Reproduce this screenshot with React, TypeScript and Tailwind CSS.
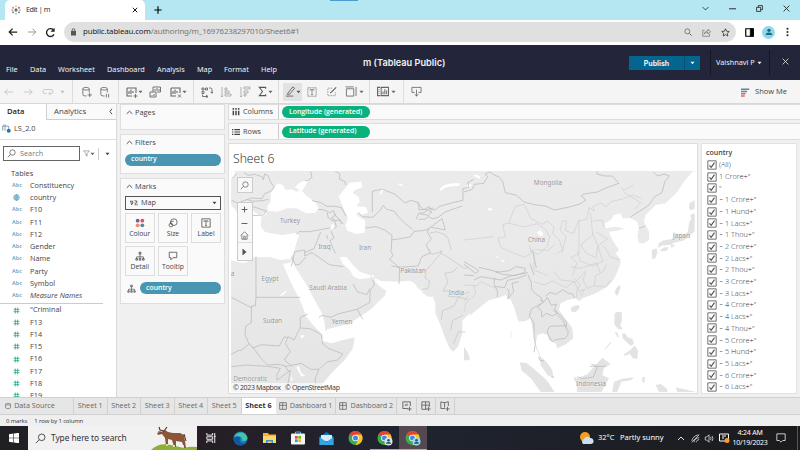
import React from 'react';

type IconProps = { w?: number; h?: number; vb?: string; children: React.ReactNode; className?: string };
const Ico = ({ w = 12, h = 12, vb = '0 0 12 12', children, className = '' }: IconProps) => (
  <svg width={w} height={h} viewBox={vb} fill="none" stroke="currentColor" strokeWidth="0.9" className={'shrink-0 ' + className}>
    {children}
  </svg>
);
const Caret = ({ className = '' }: { className?: string }) => (
  <Ico w={5} h={4} vb="0 0 5 4" className={className}><path d="M.5 .8h4L2.500 3.300z" fill="currentColor" stroke="none" /></Ico>
);
const Search = ({ size = 10, className = '' }: { size?: number; className?: string }) => (
  <Ico w={size} h={size} className={className}><circle cx="7.300" cy="4.700" r="3.600" /><path d="M4.700 7.300L1 11" /></Ico>
);
const Chevron = () => <Ico w={7} h={5} vb="0 0 7 5"><path d="M.7 3.800L3.500 1.200l2.800 2.600" /></Ico>;

function Browser() {
  return (
    <div className="font-['Noto_Sans',sans-serif] text-[#333]">
      <div className="flex h-5 bg-[#b5e7f2] pl-[5px]">
        <div className="flex w-[140px] items-center rounded-t-[5px] bg-white pl-[6px] pr-[7px]">
          <Ico w={10} h={10}>
            <g strokeWidth="1.300"><path stroke="#444" d="M6 4v4M4 6h4" /><path stroke="#d98f4a" d="M6 .5v2M2.500 2v2.400M1.300 3.200h2.400" /><path stroke="#c0606a" d="M9.500 2v2.400M8.300 3.200h2.400M.5 6h2" /><path stroke="#69939f" d="M2.500 7.600V10M1.300 8.800h2.400M9.500 7.600V10M8.300 8.800h2.400M6 9.500v2M9.500 6h2" /></g>
          </Ico>
          <span className="ml-[5px] text-[7.200px] leading-none tracking-[-.4px]">Edit | m</span>
          <Ico w={6} h={6} className="ml-auto text-black"><path d="M1.500 1.500l9 9M10.500 1.500l-9 9" strokeWidth="1.800" /></Ico>
        </div>
        <Ico w={8} h={8} className="ml-[9px] mt-[6px] text-black"><path d="M6 .5v11M.5 6h11" strokeWidth="1.700" /></Ico>
        <div className="ml-[168px] h-px w-7 bg-[#4a9fd0]" />
        <div className="ml-auto flex items-center gap-[20px] pb-[3px] pr-[10px] text-[#222]">
          <Ico w={7} h={7}><path d="M1 3.500l5 5 5-5" strokeWidth="1.400" /></Ico>
          <Ico w={7} h={7}><path d="M0 6.500h12" strokeWidth="1.600" /></Ico>
          <Ico w={7} h={7}><path d="M1 4h7v7H1zM4 4V1h7v7H8" strokeWidth="1.400" /></Ico>
          <Ico w={7} h={7}><path d="M1 1l10 10M11 1L1 11" strokeWidth="1.500" /></Ico>
        </div>
      </div>
      <div className="flex h-[25px] items-center bg-white pb-px pl-[8px]">
        <Ico w={10} h={10} className="text-[#222]"><path d="M11 6H1.500M5.500 2l-4 4 4 4" strokeWidth="1.500" /></Ico>
        <Ico w={10} h={10} className="ml-[9px] text-[#999]"><path d="M1 6h9.500M6.500 2l4 4-4 4" strokeWidth="1.200" /></Ico>
        <Ico w={11} h={11} className="ml-[8px] text-[#222]"><path d="M9.800 8A4.300 4.300 0 1 1 9 3" strokeWidth="1.500" /><path d="M10.500.8v4.400H6z" fill="currentColor" stroke="none" /></Ico>
        <div className="ml-[8px] flex h-5 w-[672px] items-center rounded-full bg-[#e0e0e0] pl-[6px] pr-[6px]">
          <Ico w={7} h={8} vb="0 0 7 8" className="text-[#555]"><rect x="1" y="3" width="5" height="4.500" fill="currentColor" stroke="none" /><path d="M2.200 3V2a1.300 1.300 0 0 1 2.600 0v1" /></Ico>
          <span className="ml-[6px] text-[7.900px] leading-none tracking-[-.16px] text-[#777]"><span className="text-[#222]">public.tableau.com</span>/authoring/m_16976238297010/Sheet6#1</span>
          <div className="ml-auto flex items-center gap-[10px] text-[#666]">
            <Ico w={8} h={8}><circle cx="5" cy="5" r="3.700" strokeWidth="1.200" /><path d="M8 8l3.500 3.500" strokeWidth="1.500" /></Ico>
            <Ico w={9} h={9}><path d="M3.500 3H1v8h9V8M3 8c.5-3 2.500-4 5-4V1.800L11.500 5 8 8V6c-2 0-4 .5-5 2z" /></Ico>
            <Ico w={9} h={9}><path d="M6 1l1.500 3.300 3.500.4-2.600 2.400.7 3.600L6 8.900 2.900 10.700l.7-3.600L1 4.700l3.500-.4z" strokeWidth="1.100" className="text-[#333]" /></Ico>
          </div>
        </div>
        <Ico w={9} h={9} className="ml-[9px] text-black"><path d="M1 1h10v10H1z" strokeWidth="1.600" /><path d="M7 1h4v10H7z" fill="currentColor" /></Ico>
        <div className="ml-[8px] flex h-[13px] w-[13px] items-center justify-center rounded-full bg-[#93d8e8]"><Ico w={8} h={8}><circle cx="6" cy="3.500" r="2.500" fill="#1a6a80" stroke="none" /><path d="M1 10.500c0-5 10-5 10 0z" fill="#1a6a80" stroke="none" /></Ico></div>
        <Ico w={3} h={10} vb="0 0 3 10" className="ml-[11px] text-[#222]"><g fill="currentColor" stroke="none"><circle cx="1.500" cy="1.700" r="1" /><circle cx="1.500" cy="5" r="1" /><circle cx="1.500" cy="8.300" r="1" /></g></Ico>
      </div>
    </div>
  );
}

function Header() {
  return (
    <header className="flex h-[35px] bg-[#23263a] font-['Noto_Sans',sans-serif] text-[7.300px] leading-none text-[#f2f2f5]">
      <nav className="flex w-[363px] items-start gap-[12px] whitespace-nowrap pl-[6px] pt-[21px]">
        <span className="w-[12px]">File</span><span className="w-[16px]">Data</span><span className="w-[37px]">Worksheet</span><span className="w-[38px]">Dashboard</span><span className="w-[28px]">Analysis</span><span className="w-[15px]">Map</span><span className="w-[25px]">Format</span><span>Help</span>
      </nav>
      <h1 className="pt-[13px] font-['Inter',sans-serif] text-[9.200px] font-semibold">m (Tableau Public)</h1>
      <div className="ml-auto flex pt-[5px]">
        <div className="mt-[6px] flex h-[14px] w-[71px] bg-[#04668f] font-['Inter',sans-serif] text-[7px] font-bold">
          <span className="flex w-[56px] items-center justify-center border-r border-[#0a4f70]">Publish</span><span className="flex flex-1 items-center justify-center"><Caret /></span>
        </div>
        <div className="ml-[10px] flex h-[25px] w-[60px] items-center whitespace-nowrap border-x border-[#15171f] pl-[5px]">Vaishnavi P<Caret className="ml-[2px]" /></div>
        <Ico w={7} h={7} className="ml-[12px] mr-[11px] mt-[8px]"><path d="M1 1l10 10M11 1L1 11" strokeWidth="1.300" /></Ico>
      </div>
    </header>
  );
}

const chart = <path d="M1 2h9v5M6 10H1V2M3 8V5M5 8V3.500M7 7V5" strokeWidth="1.100" />;
function Toolbar() {
  return (
    <div className="flex h-6 items-center border-b border-[#d8d8d8] bg-[#f5f5f5] pl-[4px] font-['Open_Sans',sans-serif] text-[#666]">
      <div className="flex w-[68px] items-center gap-[9px] text-[#bbb]">
        <Ico w={10} h={10}><path d="M11 6H1M4.500 2.500L1 6l3.500 3.500" /></Ico>
        <Ico w={10} h={10}><path d="M1 6h10M7.500 2.500L11 6 7.500 9.500" /></Ico>
        <Ico w={12} h={10}><path d="M4 8H2.500a2.300 2.300 0 0 1 0-5H10M9.500 3a2.300 2.300 0 0 1 0 5H7M9 6L7 8l2 2" /></Ico>
        <Caret className="-ml-[3px]" />
      </div>
      <div className="flex h-full w-[46px] items-center gap-[7px] border-l border-[#ddd] pl-[8px]">
        <Ico w={11}><path d="M2 2.500c0-2 7-2 7 0v4M2 2.500V9c0 1 2 1.400 4 1.300M2 2.500c0 1.800 7 1.800 7 0M9.500 7v4.500M7.200 9.300h4.600" /></Ico>
        <Ico w={11}><path d="M2 2.500c0-2 7-2 7 0v4M2 2.500V9c0 1 2 1.400 4 1.300M2 2.500c0 1.800 7 1.800 7 0M8 8v4M10.500 8v4" /></Ico>
      </div>
      <div className="flex h-full w-[75px] items-center border-l border-[#ddd] pl-[7px]">
        <Ico>{chart}<path d="M9.500 8v4M7.500 10h4" /></Ico><Caret className="mr-[6px]" />
        <Ico><path d="M4 6V1h7.500v5H8M6 5V3M8 5V2M10 5V3M1 6h6v5H1zM3 9v1M5 8v2" /></Ico>
        <Ico className="ml-[9px]">{chart}<path d="M8 8.500l3 3M11 8.500l-3 3" /></Ico><Caret />
      </div>
      <div className="flex h-full w-[85px] items-center border-l border-[#ddd] pl-[7px]">
        <Ico><path d="M1 2h2v2H1zM4.500 2h2v2h-2zM8 2h1.500Q11 2 11 4v3M1 5.500h2v2H1zM9.500 5.800L11 7.300l1-1.500M1.500 8.500v2h5M5 9l2 1.500L5 12" /></Ico>
        <Ico className="ml-[7px] text-[#aaa]"><path d="M2 1v10M.8 9.800L2 11l1.200-1.200M5 2h2v2H5zM5 5h4v2H5zM5 8h6v2H5z" /></Ico>
        <Ico className="ml-[7px] text-[#aaa]"><path d="M2 1v10M.8 9.800L2 11l1.200-1.200M5 1h6v2H5zM5 5h4v2H5zM5 8h2v2H5z" /></Ico>
        <Ico w={11} h={11} className="ml-[6px] text-[#555]"><path d="M9.500 3V1.500H2.500L6 6l-3.500 4.500h7V9" strokeWidth="1.100" /></Ico><Caret />
      </div>
      <div className="flex h-full w-[91px] items-center border-l border-[#ddd] pl-[4px]">
        <div className="flex h-[18px] w-[19px] items-center justify-center bg-[#e2e2e2] text-[#555]"><Ico w={11} h={11}><path d="M3 8L8.500 1l2 1.500L5 9H2.500zM1 11h8" /></Ico><Caret /></div>
        <Ico w={10} h={10} className="ml-[5px]"><path d="M1 1h10v10H1z" strokeDasharray="1.500 .7" /><path d="M3.500 4V3.300h5V4M6 3.300V9M5 9h2" /></Ico>
        <Ico w={10} h={11} className="ml-[10px]"><path d="M6 2H1v9h9V6" strokeDasharray="1 1" /><path d="M4 8l7-7" strokeWidth="1.500" /></Ico>
        <Ico w={12} h={11} className="ml-[8px]"><path d="M0 1h9M1 3h8v8H1zM11.500 1v10" /></Ico><Caret className="ml-[2px]" />
      </div>
      <div className="flex h-full w-[34px] items-center border-l border-[#ddd] pl-[7px]">
        <Ico w={12} h={11}><path d="M3 1.500H0v9h3M1 4h1M1 6h1M1 8h1M4 1.500h8v9H4zM6 9V6M8 9V3.500M10 9V5" strokeWidth="1.100" /></Ico><Caret className="ml-[2px]" />
      </div>
      <div className="flex h-full items-center border-l border-[#ddd] pl-[7px]"><Ico w={11} h={11}><path d="M4 7H1V1.500h10V7H8M6 4v7M3.800 8.800L6 11l2.200-2.200" /></Ico></div>
      <div className="ml-auto flex items-center pr-[13px] pt-px text-[7.500px] leading-none text-[#444]">
        <Ico w={9} h={9} className="mr-[5px]"><path stroke="#6b80a8" strokeWidth="2" d="M0 1.500h11M0 4.500h8" /><path stroke="#d96b64" strokeWidth="2" d="M0 7.500h6M0 10.500h5" /></Ico>Show Me
      </div>
    </div>
  );
}

const dims = ['Constituency', 'country', 'F10', 'F11', 'F12', 'Gender', 'Name', 'Party', 'Symbol', 'Measure Names'];
const measures = ['"Criminal', 'F13', 'F14', 'F15', 'F16', 'F17', 'F18', 'F19'];
const Detail = ({ size = 10 }: { size?: number }) => (
  <Ico w={size} h={size}><g strokeWidth=".8"><path d="M6 4v3M2 9V7h8v2M6 7v2" /><path d="M4.800 1.500h2.400v2.300H4.800zM1 9h2v2H1zM5 9h2v2H5zM9 9h2v2H9z" fill="currentColor" fillOpacity=".3" /></g></Ico>
);

function DataPane() {
  return (
    <aside className="flex w-[117px] flex-col overflow-hidden border-r border-[#d9d9d9] bg-white">
      <div className="flex h-4 shrink-0 text-[7.600px] leading-none">
        <div className="flex w-[47px] items-center border-r border-[#d0d0d0] pl-[7px] font-semibold text-[#222]">Data</div>
        <div className="flex flex-1 items-center border-b border-[#d0d0d0] bg-[#fafafa] pl-[7px] text-[7.800px]">Analytics<Ico w={4} h={7} vb="0 0 4 7" className="ml-auto mr-[3px]"><path d="M3 .8L.9 3.500 3 6.200" /></Ico></div>
      </div>
      <div className="flex h-5 shrink-0 items-start border-b border-[#ddd] pl-[2px] pt-[4px] text-[7.400px] leading-[9px]">
        <Ico w={9} h={9} className="mr-[3px]"><path d="M1 9V2.500C2 1 5 1 6 2.500M1 3h8v4M4 9V4" stroke="#54728a" /><circle cx="9" cy="9" r="2.700" fill="#2379ae" stroke="none" /></Ico>LS_2.0
      </div>
      <div className="flex h-[27px] shrink-0 items-center pl-[3px]">
        <div className="flex h-[15px] w-[77px] items-center border border-[#666] pl-[3px] text-[7.300px]"><Search size={9} /><span className="ml-[4px] text-[#777]">Search</span></div>
        <Ico w={7} h={7} className="ml-[3px] text-[#666]"><path d="M1 1.500h10L7 6v4.500L5 9V6z" /></Ico><Caret className="text-[#666]" />
        <span className="ml-[3px] h-3 w-px bg-[#ccc]" /><Caret className="ml-[6px]" />
      </div>
      <div className="h-[12.500px] shrink-0 pl-[11px] text-[7.400px] font-medium leading-[12px] text-[#444]">Tables</div>
      <div className="mr-[13px] shrink-0 border-b border-[#ccc] pb-px">
        {dims.map((d) => (
          <div key={d} className="flex h-[12.250px] items-center whitespace-nowrap pl-[12px] text-[7.300px] leading-none">
            <span className="w-[18px] text-[5.600px] font-semibold text-[#5ba0bd]">
              {d === 'country' ? <Ico w={7} h={7} className="ml-px text-[#4392b5]"><circle cx="6" cy="6" r="5" /><ellipse cx="6" cy="6" rx="2.300" ry="5" /><path d="M1 6h10M6 1v10M2 3.500h8M2 8.500h8" /></Ico> : 'Abc'}
            </span>
            <span className={d === 'Measure Names' ? 'italic' : ''}>{d}</span>
          </div>
        ))}
      </div>
      {measures.map((d) => (
        <div key={d} className="flex h-[12.250px] shrink-0 items-center pl-[13px] text-[7.300px] leading-none">
          <Ico w={7} h={7} className="mr-[10px] text-[#2db28a]"><path d="M4 1v10M8 1v10M1 4h10M1 8h10" strokeWidth="1.500" /></Ico>{d}
        </div>
      ))}
    </aside>
  );
}

const card = 'border border-[#dedede] bg-[#fafafa] shrink-0';
const cardTitle = 'flex items-center gap-[2px] pl-[5px] text-[7.400px] leading-none h-[15px]';
const bluePill = 'flex items-center rounded-full bg-[#4996b2] pl-[6px] text-[6.900px] font-semibold leading-none text-white';

function MarkButton({ label, children }: { label: string; children: React.ReactNode }) {
  return <div className="flex h-[30px] w-[29.500px] flex-col items-center border border-[#ddd] bg-[#fafafa] pt-[4px] text-[6.800px] leading-none"><div className="h-[13px]">{children}</div>{label}</div>;
}

function Cards() {
  return (
    <section className="flex w-[111px] flex-col gap-[4px] pl-[3px] pr-[3px]">
      <div className={card + ' h-[26px]'}><div className={cardTitle}><Chevron />Pages</div></div>
      <div className={card + ' h-[40px]'}><div className={cardTitle}><Chevron />Filters</div><div className={bluePill + ' ml-[4px] mt-[4px] h-[11.500px] w-[96px]'}>country</div></div>
      <div className={card + ' h-[126px]'}>
        <div className={cardTitle}><Chevron />Marks</div>
        <div className="ml-[4px] mt-[1.500px] flex h-[14px] w-[96px] items-center border border-[#555] pl-[4px] pr-[3px] text-[7.300px]"><Ico w={8} h={6} vb="0 0 12 10" className="mr-[3px]"><path d="M0 2l4 0 0 3-2 3-1-4zM7 1l4 1-1 3M8 4v5M11 6v3" strokeWidth="1.400" /></Ico>Map<Caret className="ml-auto" /></div>
        <div className="ml-[4px] mt-[3.500px] flex flex-wrap gap-x-[3.700px] gap-y-[3px]">
          <MarkButton label="Colour"><Ico w={10} h={10}><g stroke="none"><circle cx="3.200" cy="3.200" r="2.300" fill="#7b607f" /><circle cx="8.800" cy="3.200" r="2.300" fill="#e0506a" /><circle cx="3.200" cy="8.800" r="2.300" fill="#ef8c78" /><circle cx="8.800" cy="8.800" r="2.300" fill="#5686a5" /></g></Ico></MarkButton>
          <MarkButton label="Size"><Ico w={10} h={10}><circle cx="7" cy="5" r="4" /><circle cx="3.500" cy="8.500" r="2.200" fill="#fafafa" /><path d="M5 8a2 2 0 0 1 0-4h2" /></Ico></MarkButton>
          <MarkButton label="Label"><Ico w={10} h={10}><path d="M1 1h10v10H1zM3.500 4.500v-1h5v1M6 3.500V9M5 9h2" /></Ico></MarkButton>
          <MarkButton label="Detail"><Detail /></MarkButton>
          <MarkButton label="Tooltip"><Ico w={10} h={10}><path d="M1.500 1.500h9v6.500H6l-2.500 2.500V8h-2z" /></Ico></MarkButton>
        </div>
        <div className="ml-[6px] mt-[6px] flex items-center"><Detail size={9} /><div className={bluePill + ' ml-[4px] h-[12px] w-[81px]'}>country</div></div>
      </div>
    </section>
  );
}

const Shelf = ({ name, pill, rows }: { name: string; pill: string; rows?: boolean }) => (
  <div className={'flex shrink-0 items-center border-y border-l border-[#ddd] bg-[#fafafa] text-[7.300px] leading-none ' + (rows ? 'h-[17px]' : 'h-[16px]')}>
    <div className="flex h-full w-[50px] items-center border-r border-[#ccc] pl-[3px]">
      <Ico w={8} h={8} className="mr-[3px]"><g strokeWidth="2.200">{rows ? <path d="M0 2.500h2M3.500 2.500H12M0 6h2M3.500 6H12M0 9.500h2M3.500 9.500H12" strokeWidth="1.700" /> : <path d="M2 0v2.500M2 4v7M6 0v2.500M6 4v7M10 0v2.500M10 4v7" />}</g></Ico>{name}
    </div>
    <div className="ml-[3px] flex h-[12px] w-[88px] items-center rounded-full bg-[#08b27c] pl-[7px] text-[6.900px] font-semibold tracking-[-.03px] text-white">{pill}</div>
  </div>
);

/* Basemap, drawn in tiles that each use three units per pixel. */
function WorldMap() {
  const label = 'Noto Sans, sans-serif';
  return (
    <svg viewBox="231 171 464 221" className="block h-[221px] w-[464px]">
      <defs>
        <linearGradient id="land" x1="0" y1="0" x2=".25" y2="1"><stop offset="0" stopColor="#ebebeb" /><stop offset=".45" stopColor="#eaeaea" /><stop offset="1" stopColor="#e4e4e4" /></linearGradient>
      </defs>
      <rect x="231" y="171" width="464" height="221" fill="url(#land)" />
      <g fill="#fff">
        <path d="M231 205l6 7 9 0 7-1 8 5 0 11 4 5 10 2 8 1 12-2 4 2-3 9-2 8-4 7-10 1-10-3h-15l-10 6-7-1-7-2z" />
        <g transform="translate(228 100) scale(.33333)">
          <path d="M148 250l17 5 8 15 20-2 12 7 10-5-15-8 15-14 25-12-5 17-13 20 13 14 27 20 10 18-10 13-27 2-30-15-30 0-25 10-30-3-2-14 10-13 0-25 12-18zM345 272l20-24 35-3 3 17-23 8-5 10 17 10 3 15-10 13 30 4 5 16-20 7-10-10-5 10 27 17-2 36-25 4-27-10-6-17 8-20-15-35-13-30z" />
          <path d="M634 270q10-24 62-20l-2 8q-40-2-56 15zM455 282l8-18 4 3-8 17zM10 210h12l-4 20-8 8zM308 375l10-2 1 20-7-1zM92 345l25-8-3 8-18 7zM514 250l12 6-4 3-12-6z" />
        </g>
        <g transform="translate(228 250) scale(.33333)">
          <path d="M165 42l20 48 20 40 17 35 13 35 20 25 20 20 10 17-5 10 30 8 35-10 35-8-5 33-25 35-40 40-42 50v10H725V190l-15 15-5 40-15 45-15 15-10-10-15-35-15-40-13-30 0-30-7-20-15 0-15-10-5-10 6-8-15 5-11-17-15-8-35 3-50-2-23-10-12-8-30-10-20-20-20-25-20 2 8 18 22 20 12 20 18 8 30-4 10-12 8 25 12 12 20 13-5 15-20 20-20 20-30 20-30 20-30 10-40 10-8 6-2-25-7-25-13-25-20-35-15-30-20-30-15-25-9-20-4 10-11 2z" />
          <path d="M155 137l18-15 5-1-12 15zM205 352l7-4 8 22 12 6-12 4zM217 258l8-4 4 6-8 5zM190 375l4 15-6 4z" />
        </g>
        <g transform="translate(464 275) scale(.33333)">
          <path d="M-5 135L20 120 50 95 75 75l25-5 25-10 15 15 10 20 10 35 5 10 20-2 15-8 5 30 7 30 3 25 10 25 5 30 20 30 18 8-3-23-17-23-18-17-8-20-7-20 5-25 15-5 15 5 5 15 20 10 5 15 25-12 23-18-3-30-25-35-15-20 5-20 20-10 25-5 10 8 15-10 35-13 35-20 25-30 15-40H694v400H-5z" />
        </g>
        <g transform="translate(464 160) scale(.33333)">
          <path d="M450 356l18-36 2-20-15-20 10-10-10-15-15-25-5-15 25-3 20-7-25-5-30 5-3-15 18-10 10-15 20-5 5 15 25 0 20 10 5 20-5 20 5 25 15 0 15-10 0-25-15-30 5-20 30-30 30-5 35-35 20-30 25-30H694V360H450z" />
          <path d="M32 42l17 7-3 8-15-8zM8 76l12-4 3 6-12 8zM70 145l12 0 4 6-10 1zM218 218l10-8 10 12-8 8zM97 288l8 4-8 1zM112 300l12 1-8 6z" />
        </g>
      </g>
      <g fill="#e3e3e3">
        <g transform="translate(464 160) scale(.33333)">
          <path d="M678 165l14-5v55l-17 12-18 16-20 3-20 8-25 3-10 7 2-15 15-8 23-3 22-10 15 5 12-18 5-30 6-8zM676 130l16-10v26l-12 5-5-8zM588 270l16-9 10 2-6 9-16 2zM563 270l15-5 2 12-6 18-9 3zM620 252l14 4-12 8z" />
        </g>
        <g transform="translate(464 275) scale(.33333)">
          <path d="M452 55l4-15 12-10 2 8-10 25zM320 100l10-8 15-2 2 8-12 14-12-2zM452 115l6-4 15 0 1 25-5 15 7 12-12 0-13-15zM475 175l10 1 5 10 15 6 5 15-10 5-12-10-12-12zM480 238l18-12 14-14 10 14-2 26-15-3-7-12-18 6zM452 170l8 2 5 16-5-2zM440 200l3 2-20 22-2-2zM168 262l20 2 25 20 35 32 24 35H230l-28-40-30-25zM0 215l10 15 8 20-3 6-15 0zM330 305l10 5 30-12 25-28 20-22 25 20-20 10-5 22 20 10-12 20-12 25H338l2-30-10-10zM450 320l25-9 35-4-8 8-30 5-14 35h-14zM535 307l8-1-2 18-7-5zM575 330l15-3 20 15 0 9H585zM635 337l45 10 20 4H640zM140 168h2v20h-2z" />
        </g>
      </g>
      <g fill="none" stroke="#bdbdbd" strokeWidth="2.400" strokeLinejoin="round">
        <g transform="translate(228 100) scale(.33333)">
          <path d="M48 218l12 8 20-3 22 7 4 10 4-18 10 5 8 20 10 14-8 12-20 8-8 15-30-2-35 12M55 298l20 6 28-2 18-4M60 315l55 18-8 12-32 2M12 235l15-14M10 300l20 10 25-2M248 214l4 18-10 8-12 2M322 214l13 8 0 16 16 7 3 10M252 302l25 5 20 12 25 0 18 4 14 26M270 328l20 2 15 8 12-6 5 14-12 8 12 8 14-3 4 12M298 338l2 14 12 10 8 0 5 18-15 14 8 20-12 8 6 14 10 24M318 342l28 30M205 403l8-8 32 0 32-6 28-5M278 396l-20 50-28 12M296 405l4 12M433 336v-62l30-7 38 16 30 26 18-8 24 8 0 20 15 0 15-10 5 10 15 0 12-10 35-10 35-8 0-35 18-4-4-14 18-10M392 338l12 12 30 2 20-18 12-18 10 12 24 6 10 15 22 22 22 18M412 384l32-4 26 10 22 16-2 44M490 420l28-4 30-6 10-16 26-2 18-5 8-8M564 358l8-18 28 6 12-10-14-5-10 8-12 0M572 358l20 0 8-8 14 6 16-4 22-16 50-18M610 380l32-24 10 34-42-8M604 382l-6 14 12 22-16 16 10 18M568 310l20 20 28-6" />
          <path d="M605 400l20-5 25 8 10 12 10 35" strokeWidth="1.800" />
        </g>
        <g transform="translate(228 250) scale(.33333)">
          <path d="M84 20v122H217M84 142l-2 26H70v50l-17 10-2 26 12 28-22 18-10 2-24 12M10 142l62 32M190 50l10-45 30-5 0 18 22-10 18 12 34 24 42 6M192 20l10 25 12-2 20-22M375 102l14 24 28 8 8-18M435 90l4 15-12 15-2 38-38 20-58 14-20 10-28-6-8 6M388 178l16 30M239 192l-22 10 0 32 30 2 34 18 0 12M216 234l-18 36-18-10-8 20 15 25-18 25 24 20M181 264l-12-4-15 28-30-2-24-2-25 10-12-14M73 290l30 40 16 15 34-2 18 5 12 18M171 350l48-10 30 18 24 0 24-22 32-6 16-18-42-16-20-16 0-12M262 425v-40l10-25M10 350l44-5 65 4 38 6-10 18 0 18 40-30-10 56-35 12-6 20M487 0l8 16-10 12 28 24M510 52l60-4 12-28 26-12-5-8M490 48l25 4-2 50" />
          <path d="M640 0l-3 12-42 48-4 24 14 10-5 22-25 2M640 10l20 12 50 34 12-4M602 10l16 2 24-8M690 50l-14 15-26 5 10 25-15 28 24 0-8 16 30 2 28 8M640 210l4-28 34-14 14-28 32-15M668 242l5-30 32-16M676 282l15-36 22 0" strokeWidth="1.700" />
        </g>
        <g transform="translate(464 160) scale(.33333)">
          <path d="M0 96l25-8 6-15 28-3 12-20-8-8 15-6 14 10 12 4 12 14 8 34 34 8 22 20 32 8 32 4 28 12 40-8 36-10 18-12-14-12 8-6 40-6 30-14 35-12-20-22-22 0-24-6 0-15M568 36l14 12 18-6 16 6-14 18-8 32-22 12-18 26-55 35M525 206l18-8M0 305l24 14 20 12-8 10-36-28M44 322l60 14M98 337l38-5 20-12 28 5-2 12-30 10-36-4-22-8M205 268l12 56" />
          <path d="M182 133l-28 6-20 50-18 5 8 36-22 4 8 28 40 18 34 12 18-14-6-22M134 189l45 12 40-10 26 18 12 22-8 30-26 22-24-10M0 240l90-10M182 135l18 40 34 18 18-10 18 20-4 18 20 18 10 30-18 12M212 268l40 4 20-18M294 280l12-50-18-20 8-28 12 2-4 28 24 8 16-38 24-4 8-35 15 10-4-14 25-10 14 12 15-16 34-8 32-12 24 10M345 180l0 100-24 12 18 16-14 40M380 160l6 65-36 30 16 24 30 14 6-36-16-35M386 184l28-4 6 20M396 216l34 20-28 22 14 46-30 14-38-16-8-30M416 256l12 15 10 20 28 8M472 82l10 16 48 30-18 20M480 90l28-14M320 320l28 5 50-16 10 28M210 280l0 50 40 16" strokeWidth="1.600" stroke="#c6c6c6" />
        </g>
        <g transform="translate(464 275) scale(.33333)">
          <path d="M0 0l30 2M30 15l20-10 60 10 30-12 52-10M92 8l-2 20 10 18 0 20M92 34l30 4 8-22 30-6 28-10M130 40l6 12-5 20 18-22-5-25 20-5M192 0l10 22 0 20 12 14 16 10 8 16-14 8-22 12-6 22 14 20 0 42 4 22-4 24M228 75l12 6 10-14 12 24 16-4-6 14 8 14-14 8-20-8-12 12-2-20-12-10 16-14M244 64l14-12 18 6 20-14 15 10 14 3 8 12M268 106l20 14 20 22-2 18M306 160l6 4 0 14-8 12-28 4-12 6-12-22-2-12 8-12 50-2M306 160l-8-22-18-18M224 246l4 10 12 2M262 305l8 2M340 305l16 6 32-5 12-30M382 268l16 4M378 274l48 0M210 0l-12-35" />
          <path d="M0 30l40 2 10-12 45 20M0 110l5-25 30-28-5-25M0 80l14-20M210 20l30 10 26-12 40 20 24-18 16 30 16-8-12 22M270-10l20 25 45 5 32-34M330 10l18 18-10 20 0 20M365-10l-8 25 12 25 22-8 4-30 24-14 8-20M390 32l32 4 22-20" strokeWidth="1.600" stroke="#c6c6c6" />
        </g>
      </g>
      <g fontFamily={label} fontSize="6.400" fill="#999" stroke="#ededed" strokeWidth="1.200" paintOrder="stroke" textAnchor="middle">
        <text x="290" y="223">Turkey</text><text x="324.500" y="249">Iraq</text><text x="365" y="249.500">Iran</text><text x="270" y="281">Egypt</text><text x="328" y="289.500">Saudi Arabia</text><text x="272.500" y="323">Sudan</text><text x="342" y="324">Yemen</text><text x="413" y="272.500">Pakistan</text><text x="456.500" y="295">India</text><text x="548" y="185">Mongolia</text><text x="536.500" y="241.500">China</text><text x="681.500" y="238">Japan</text><text x="591" y="386">Indonesia</text><text x="250.500" y="381">Democratic</text><text x="232.500" y="276">a</text>
      </g>
      <rect x="231" y="383" width="111" height="9" fill="#fff" fillOpacity=".65" />
      <g fontFamily={label} fontSize="7" fill="#444"><text x="233" y="389.500" textLength="48">© 2023 Mapbox</text><text x="285" y="389.500" textLength="55">© OpenStreetMap</text></g>
    </svg>
  );
}

function MapControls() {
  return (
    <div className="absolute left-[5.500px] top-[6px] flex w-[16px] flex-col text-[#555]">
      <div className="flex h-[16px] items-center justify-center border border-[#ccc] bg-[#f8f8f8]"><Search size={9} /></div>
      <div className="mt-[9px] flex h-[59px] flex-col items-center border border-[#ccc] bg-[#f8f8f8]">
        <div className="flex h-[14px] items-center"><Ico w={7} h={7}><path d="M6 1v10M1 6h10" strokeWidth="1.600" /></Ico></div>
        <div className="flex h-[13px] items-center"><Ico w={7} h={7}><path d="M1 6h10" strokeWidth="1.600" /></Ico></div>
        <div className="flex h-[14px] w-full items-center justify-center border-b border-[#ddd]"><Ico w={9} h={9}><path d="M1 6l5-5 5 5M2.500 5v6h7V5M5 11V7h2v4" /></Ico></div>
        <div className="flex h-[17px] items-center"><Ico w={7} h={8}><path d="M3 1l6 5-6 5z" fill="currentColor" /></Ico></div>
      </div>
    </div>
  );
}

const filterValues = ['(All)', '1 Crore+"', '"', '~ 1 Crore+"', '~ 1 Hund+"', '~ 1 Lacs+"', '~ 1 Thou+"', '~ 2 Crore+"', '~ 2 Lacs+"', '~ 2 Thou+"', '~ 3 Crore+"', '~ 3 Lacs+"', '~ 4 Crore+"', '~ 4 Lacs+"', '~ 4 Thou+"', '~ 5 Crore+"', '~ 5 Hund+"', '~ 5 Lacs+"', '~ 6 Crore+"', '~ 6 Lacs+"'];

function Canvas() {
  return (
    <main className="flex flex-1 flex-col">
      <Shelf name="Columns" pill="Longitude (generated)" />
      <div className="h-[3px]" />
      <Shelf name="Rows" pill="Latitude (generated)" rows />
      <div className="mt-[3px] flex h-[251px] gap-[3px]">
        <div className="w-[470px] border border-[#ddd] bg-white pl-[2px]">
          <h2 className="h-[27px] pl-[2px] pt-[6px] text-[12.200px] font-light leading-[17px] text-[#222]">Sheet 6</h2>
          <div className="relative"><WorldMap /><MapControls /></div>
        </div>
        <div className="w-[96px] border border-[#e2e2e2] bg-white pl-[4px]">
          <div className="h-[15px] pt-[4px] text-[7px] font-semibold leading-[9px]">country</div>
          {filterValues.map((v) => (
            <div key={v} className="flex h-[11.700px] items-center whitespace-pre pl-px text-[7.300px] font-light leading-none text-[#333]">
              <Ico w={10} h={10} className="mr-[2px] text-[#555]"><path d="M1 1h10v10H1z" strokeWidth="1" /><path d="M3 6.500l2 2.300L9 3.200" strokeWidth="1.400" /></Ico>{v}
            </div>
          ))}
        </div>
      </div>
    </main>
  );
}

const GridIco = () => <Ico w={8} h={8}><path d="M1 1h10v10H1zM1 5h10M5.500 1v10" strokeWidth="1.200" /></Ico>;
const sheetTab = 'flex h-full items-center justify-center border-r border-[#d0d0d0] ';

function SheetTabs() {
  return (
    <div className="font-['Open_Sans',sans-serif] text-[#666]">
      <div className="flex h-[18px] items-center border-y border-[#d0d0d0] bg-[#e6e6e6] text-[7.200px] leading-none">
        <div className={sheetTab + 'w-[74px] pr-[13px]'}><Ico w={6} h={8} className="mr-[3px]"><path d="M1 2.500c0-2 10-2 10 0v7c0 2-10 2-10 0zM1 2.500c0 2 10 2 10 0" strokeWidth="1.300" /></Ico>Data Source</div>
        {['Sheet 1', 'Sheet 2', 'Sheet 3', 'Sheet 4', 'Sheet 5'].map((s) => <div key={s} className={sheetTab + 'w-[33.500px]'}>{s}</div>)}
        <div className="flex h-full w-[34px] items-center justify-center bg-white font-bold text-[#333]">Sheet 6</div>
        <div className={sheetTab + 'w-[60px] gap-[3px] pl-px tracking-[-.05px]'}><GridIco />Dashboard 1</div>
        <div className={sheetTab + 'w-[61.500px] gap-[3px] pl-px tracking-[-.05px]'}><GridIco />Dashboard 2</div>
        <div className={sheetTab + 'w-[20px]'}><Ico w={10} h={10}><path d="M7 9H1V1h9v5M4 6V4M6 6V3M9 7v5M6.500 9.500h5" strokeWidth="1.100" /></Ico></div>
        <div className={sheetTab + 'w-[19px]'}><Ico w={10} h={10}><path d="M7 10H1V1h9v6M1 5h9M5.500 1v9M9 7v5M6.500 9.500h5" strokeWidth="1.100" /></Ico></div>
        <div className={sheetTab + 'w-[19px]'}><Ico w={10} h={10}><path d="M6 9L1 9V1l4 1 5-1v5M5.500 2v6M9 7v5M6.500 9.500h5" strokeWidth="1.100" /></Ico></div>
      </div>
      <div className="flex h-[11px] items-center gap-[7px] bg-[#efefef] pl-[6px] text-[6px] leading-none tracking-[-.15px] text-[#333]"><span>0 marks</span><span>1 row by 1 column</span></div>
    </div>
  );
}

function Chrome({ badge }: { badge?: string }) {
  return (
    <svg width="16" height="16" viewBox="0 0 16 16">
      <circle cx="7.500" cy="8" r="7" fill="#3bab52" /><path d="M1.400 4.500A7 7 0 0 1 13.600 4.500L7.500 8z" fill="#e54335" /><path d="M13.600 4.500A7 7 0 0 1 7.500 15L10.500 9.500 7.500 4.500z" fill="#fbc520" /><circle cx="7.500" cy="8" r="3.300" fill="#fff" /><circle cx="7.500" cy="8" r="2.500" fill="#4285e8" />
      {badge && <g><circle cx="11.500" cy="11.500" r="4" fill={badge} /><circle cx="11.500" cy="10.300" r="1.300" fill="#25566e" /><path d="M9 13.800c0-2.800 5-2.800 5 0z" fill="#25566e" /></g>}
    </svg>
  );
}

function Taskbar() {
  return (
    <footer className="flex h-6 bg-gradient-to-r from-[#2b171c] via-[#1f2430] to-[#1b1b1d] font-['Noto_Sans',sans-serif] text-white">
      <div className="flex w-[28px] items-center justify-center bg-[#202024]"><Ico w={10} h={10}><path fill="white" stroke="none" d="M0 1.500l5.300-.8v5H0zM6 .6l6-.9v6H6zM0 6.400h5.300v5L0 10.600zM6 6.400h6v6L6 11.400z" /></Ico></div>
      <div className="flex w-[169px] items-center overflow-hidden bg-[#f1f1f1] pl-[7px] text-[#333]">
        <Search size={11} /><span className="ml-[5px] whitespace-nowrap text-[8.400px] leading-none tracking-[-.08px]">Type here to search</span>
        <svg width="46" height="24" viewBox="0 0 46 24" className="ml-auto shrink-0">
          <path d="M0 24q8-8 20-5 8 2 13 3 7-2 13-1v3z" fill="#8eae35" />
          <path d="M10 6l4-2 3 2 5 1 7 0 4 2 1 6 1 7h-2l-2-6-6-1 0 6h-2l-2-7-4-1 0 7h-2l-1-8-3-4-4 1-1-2z" fill="#8a5636" />
          <path d="M8 1l1 3 4 1 3-4M10 6l-3 0" fill="none" stroke="#4b3022" strokeWidth="1.100" /><path d="M33 8l2 7" stroke="#4b3022" /><path d="M16 18v2M23 19v2M32 19v2" stroke="#fff" strokeWidth="1.400" />
        </svg>
      </div>
      <div className="flex w-[28px] items-center justify-center"><Ico w={10} h={10}><path d="M1 0v2.500h7V0M1 4.500h7v3H1zM1 12V9.500h7V12M10.500 0v12M9.500 4h2" strokeWidth="1.100" /></Ico></div>
      <div className="flex w-[30px] items-center justify-center">
        <svg width="15" height="15" viewBox="0 0 15 15"><circle cx="7.500" cy="7.500" r="7" fill="#147bc4" /><path d="M1 6C3 1 12-1 14.500 7c0 3-4 3.500-6 2.500C10 7 7 4 1 6z" fill="#45c6a1" /><path d="M1 7c3-3 7-1 6 1-2 4 3 5 6 4-5 5-12 1-12-5z" fill="#1056a3" /></svg>
      </div>
      <div className="flex w-[29px] items-center justify-center"><svg width="13" height="12" viewBox="0 0 13 12"><path d="M0 1h5l1 1.500h7V11H0z" fill="#f2b632" /><path d="M0 4h13v7H0z" fill="#ffd667" /><path d="M3 11V8h7v3H8.500V9.500h-4V11z" fill="#3a92cf" /></svg></div>
      <div className="flex w-[28px] items-center justify-center"><svg width="14" height="14" viewBox="0 0 14 14"><path d="M4.500 3V1h5v2" fill="none" stroke="#55b9e8" /><rect y="2.500" width="14" height="11" rx="1" fill="#f4f4f4" /><path d="M4 5h2.700v2.700H4z" fill="#e8502b" /><path d="M7.300 5H10v2.700H7.300z" fill="#78b51e" /><path d="M4 8.300h2.700V11H4z" fill="#20a0df" /><path d="M7.300 8.300H10V11H7.300z" fill="#f5b51a" /></svg></div>
      <div className="flex w-[29px] items-center justify-center"><svg width="15" height="13" viewBox="0 0 15 13"><path d="M.5 5l7-5 7 5v8H.5z" fill="#1673bb" /><path d="M2 3h11v6H2z" fill="#d7eef9" /><path d="M.5 5l7 5 7-5v8H.5z" fill="#32a5e5" /></svg></div>
      <div className="flex w-[29px] items-center justify-center"><Chrome /></div>
      <div className="flex w-[29px] items-center justify-center border-b border-[#72b7e8]"><Chrome badge="#dbe2ea" /></div>
      <div className="flex w-[28px] items-center justify-center border-b border-[#72b7e8] bg-[#554850]"><Chrome badge="#9edced" /></div>
      <div className="ml-auto flex items-center text-[7.500px] leading-none">
        <svg width="15" height="15" viewBox="0 0 15 15"><circle cx="6" cy="6" r="5" fill="#f49c22" /><path d="M4 13a3 3 0 0 1 1-5 3.500 3.500 0 0 1 6-1 3 3 0 0 1 1 6z" fill="#cbdff1" /></svg>
        <span className="ml-[4px] w-[22px] whitespace-nowrap">32°C</span><span className="w-[57px] whitespace-nowrap">Partly sunny</span>
        <Ico w={8} h={7} vb="0 0 8 7"><path d="M1 5l3-3 3 3" /></Ico>
        <Ico w={9} h={9} className="ml-[6px]"><path d="M1 11L11 1M4 11c0-3 3-6 7-6M7 11c0-2 2-3.500 4-3.500M1 9c1-4 4-7 9-8" /></Ico>
        <Ico w={10} h={9} className="ml-[4px]"><path d="M1 4h2l3-3v10L3 8H1zM8 4q1.500 2 0 4M10 2.500q2.500 3.500 0 7" /></Ico>
        <svg width="11" height="10" viewBox="0 0 11 10" className="ml-[5px]"><path d="M.5 1h9v7h-9zM3 3h4M3 5h2" fill="none" stroke="white" /><circle cx="8" cy="7.500" r="2.500" fill="#f89b27" /></svg>
        <div className="ml-[2px] w-[36px] text-center text-[7px] leading-[10px] tracking-[-.2px]"><div>4:24 AM</div><div>10/19/2023</div></div>
        <Ico w={10} h={10} className="ml-[8px]"><path d="M1 1h10v8H8l-2 2-2-2H1z" /></Ico>
        <span className="ml-[11px] mr-[2px] h-6 w-px bg-[#555]" />
      </div>
    </footer>
  );
}

export default function App() {
  return (
    <div className="h-[450px] w-[800px] overflow-hidden bg-[#f0f0f0]">
      <Browser />
      <Header />
      <Toolbar />
      <div className="flex h-[293px] overflow-hidden font-['Open_Sans',sans-serif] text-[#444]">
        <DataPane />
        <Cards />
        <Canvas />
      </div>
      <SheetTabs />
      <Taskbar />
    </div>
  );
}
